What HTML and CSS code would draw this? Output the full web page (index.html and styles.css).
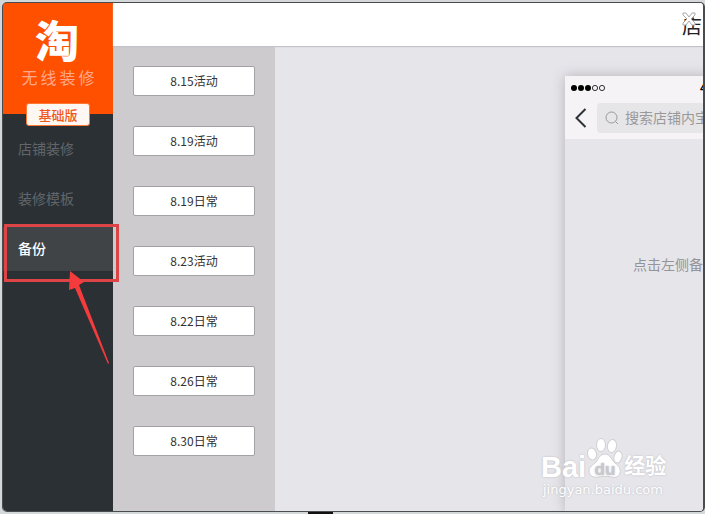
FILE: index.html
```
<!DOCTYPE html>
<html lang="zh-CN">
  <head>
    <meta charset="utf-8">
    <title>无线装修</title>
    <link rel="stylesheet" href="styles.css">
  </head>
  <body>
    <div class="window">
      <aside class="sidebar">
        <div class="brand">
          <div class="brand-logo">淘</div>
          <div class="brand-name">无线装修</div>
          <span class="brand-tag">基础版</span>
        </div>
        <nav class="menu">
          <a href="#shop" class="menu-item">店铺装修</a>
          <a href="#template" class="menu-item">装修模板</a>
          <a href="#backup" class="menu-item active">备份</a>
        </nav>
      </aside>
      <div class="content">
        <header class="topbar">
          <h1 class="title">店</h1>
          <button type="button" class="close" aria-label="关闭">
            <svg width="14" height="14" viewBox="0 0 14 14">
              <path d="M1 1h3l3 4 3-4h3v2L9 7l4 4v2h-3L7 9l-3 4H1v-2l4-4-4-4z" fill="#fff" stroke="#aaa"/>
            </svg>
          </button>
        </header>
        <div class="panels">
          <div class="backups">
            <button type="button" class="backup">8.15活动</button>
            <button type="button" class="backup">8.19活动</button>
            <button type="button" class="backup">8.19日常</button>
            <button type="button" class="backup">8.23活动</button>
            <button type="button" class="backup">8.22日常</button>
            <button type="button" class="backup">8.26日常</button>
            <button type="button" class="backup">8.30日常</button>
          </div>
          <main class="preview">
            <div class="phone">
              <div class="phone-head">
                <div class="status">
                  <svg width="36" height="8" viewBox="0 0 36 8">
                    <g fill="#000">
                      <circle cx="3" cy="4" r="3"/>
                      <circle cx="10" cy="4" r="3"/>
                      <circle cx="17" cy="4" r="3"/>
                    </g>
                    <g fill="none" stroke="#333">
                      <circle cx="24" cy="4" r="2.6"/>
                      <circle cx="31" cy="4" r="2.6"/>
                    </g>
                  </svg>
                  <span class="clock">4:21 PM</span>
                </div>
                <div class="search-row">
                  <button type="button" class="back" aria-label="返回">
                    <svg width="12" height="20" viewBox="0 0 12 20">
                      <path d="M10.500 1L1.500 10l9 9" fill="none" stroke="#2d3238" stroke-width="2"/>
                    </svg>
                  </button>
                  <label class="search">
                    <svg width="14" height="14" viewBox="0 0 14 14" fill="none" stroke="#999">
                      <circle cx="6.500" cy="6.500" r="5.500"/>
                      <path d="M10.500 10.500L13 13"/>
                    </svg>
                    <input type="text" class="search-input" placeholder="搜索店铺内宝贝" aria-label="搜索">
                  </label>
                </div>
              </div>
              <p class="hint">点击左侧备份</p>
            </div>
          </main>
        </div>
      </div>
    </div>

    <!-- highlight over the backup entry -->
    <div class="mark"></div>
    <svg class="arrow" width="44" height="96" viewBox="0 0 44 96">
      <path d="M3 0L17 11l-5 3 30 78-1 1L8 17l-6 2z" fill="#f53b3b"/>
    </svg>

    <div class="watermark">
      <div class="watermark-top">
        <span class="watermark-bai">Bai</span>
        <svg width="36" height="42" viewBox="0 0 36 42">
          <g fill="#fff" stroke="#cfcfd4">
            <ellipse cx="5" cy="17" rx="4.500" ry="6" transform="rotate(-12 5 17)"/>
            <ellipse cx="14" cy="8" rx="4.500" ry="6.500"/>
            <ellipse cx="25" cy="9" rx="4.500" ry="6.500" transform="rotate(8 25 9)"/>
            <ellipse cx="31" cy="20" rx="4" ry="6" transform="rotate(14 31 20)"/>
            <path d="M18 17c5 0 6 5 10 9 4 3 6 6 5 10-1 4-5 5-9 4-4-1-8-1-12 0-5 1-10-1-10-6 0-4 4-6 7-9 3-4 4-8 9-8z"/>
          </g>
          <text class="watermark-du" x="18" y="38" text-anchor="middle">du</text>
        </svg>
        <span class="watermark-cn">经验</span>
      </div>
      <div class="watermark-url">jingyan.baidu.com</div>
    </div>
  </body>
</html>
```

FILE: styles.css
```
*{
  box-sizing: border-box;
}
body{
  margin: 0;
  height: 100vh;
  padding: 2px 0 2px 2px;
  overflow: hidden;
  background: linear-gradient(#111, #111) 308px 100% / 25px 3px no-repeat #d5d8d8;
  font-family: "Noto Sans CJK SC", sans-serif;
}
button{
  font-family: inherit;
  padding: 0;
  cursor: pointer;
}
.window{
  display: flex;
  height: 100%;
  border: 1px solid #4a4d50;
  border-right-width: 2px;
  border-radius: 5px;
  overflow: hidden;
  background-color: #e6e5ea;
}

/* sidebar */
.sidebar{
  flex: 0 0 110px;
  background-color: #2b3034;
}
.brand{
  position: relative;
  height: 111px;
  padding-top: 12px;
  background-color: #ff5000;
  text-align: center;
}
.brand-logo{
  padding-right: 2px;
  color: #fff;
  font-size: 44px;
  font-weight: 900;
  line-height: 48px;
}
.brand-name{
  padding-left: 3px;
  color: #ffa78c;
  font-size: 16px;
  line-height: 28px;
  letter-spacing: 3px;
}
.brand-tag{
  position: absolute;
  left: 23px;
  bottom: -12px;
  width: 64px;
  border: 1px solid #ff7733;
  border-radius: 3px;
  background-color: #fff8f2;
  color: #f0571c;
  font-size: 13px;
  font-weight: 500;
  line-height: 21px;
}
.menu{
  display: flex;
  flex-direction: column;
  gap: 6px;
  padding-top: 13px;
}
.menu-item{
  padding: 0 0 2px 15px;
  color: #61666b;
  font-size: 14px;
  line-height: 42px;
  text-decoration: none;
}
.menu-item.active{
  background-color: #404446;
  color: #fff;
  font-weight: 500;
}

/* content */
.content{
  flex: 1;
  min-width: 0;
  display: flex;
  flex-direction: column;
}
.topbar{
  position: relative;
  z-index: 1;
  flex: 0 0 43px;
  padding-left: 569px;
  background-color: #fff;
  box-shadow: 0 1px 1px #c4c4c8;
  overflow: hidden;
}
.title{
  margin: 0;
  color: #222;
  font-size: 20px;
  font-weight: 400;
  line-height: 46px;
}
.close{
  position: absolute;
  top: 9px;
  right: 7px;
  width: 14px;
  height: 14px;
  border: 0;
  background: none;
}
.close svg{
  display: block;
}
.panels{
  flex: 1;
  min-height: 0;
  display: flex;
}
.backups{
  flex: 0 0 162px;
  display: flex;
  flex-direction: column;
  gap: 30px;
  padding: 20px;
  background-color: #cdcbce;
}
.backup{
  flex: 0 0 30px;
  padding-bottom: 2px;
  border: 1px solid #a3a1a5;
  border-radius: 2px;
  background-color: #fff;
  color: #333;
  font-size: 12px;
}
.preview{
  flex: 1;
  min-width: 0;
  display: flex;
  padding: 30px 0 0 290px;
  overflow: hidden;
}
.phone{
  flex: 0 0 320px;
  background-color: #e6e5ea;
  box-shadow: 0 0 12px #b4b3b8;
}
.phone-head{
  height: 63px;
  padding: 6px 6px 0;
  background-color: #f5f3f6;
}
.status{
  display: flex;
  align-items: center;
  height: 12px;
}
.clock{
  padding-left: 93px;
  color: #000;
  font-size: 11px;
  font-weight: 700;
}
.search-row{
  display: flex;
  align-items: center;
  gap: 10px;
  padding: 9px 0 0 4px;
}
.back{
  width: 12px;
  height: 20px;
  border: 0;
  background: none;
}
.back svg{
  display: block;
}
.search{
  flex: 1;
  display: flex;
  align-items: center;
  gap: 6px;
  height: 30px;
  padding-left: 8px;
  border-radius: 4px;
  background-color: #e6e5e8;
}
.search-input{
  flex: 1;
  min-width: 0;
  padding: 0 0 2px;
  border: 0;
  background: none;
  font-family: inherit;
  font-size: 14px;
}
.search-input::placeholder{
  color: #999;
}
.hint{
  margin: 0;
  padding: 114px 0 0 68px;
  color: #949398;
  font-size: 14px;
  line-height: 22px;
}

/* overlays */
.mark{
  position: absolute;
  left: 4px;
  top: 224px;
  width: 115px;
  height: 58px;
  border: 3px solid #dc4446;
}
.arrow{
  position: absolute;
  left: 67px;
  top: 271px;
}
.watermark{
  position: absolute;
  left: 541px;
  top: 437px;
  color: #fff;
  font-family: "Liberation Sans", "Noto Sans CJK SC", sans-serif;
  text-shadow: 0 0 2px #b4b4ba;
}
.watermark-top{
  display: flex;
  align-items: flex-end;
  gap: 1px;
  height: 42px;
}
.watermark-bai{
  font-size: 29px;
  font-weight: 700;
  line-height: 24px;
}
.watermark-du{
  fill: #c8c8ce;
  font-size: 17px;
  font-weight: 700;
}
.watermark-cn{
  font-size: 21px;
  font-weight: 700;
  line-height: 26px;
}
.watermark-url{
  padding-left: 2px;
  font-family: "DejaVu Sans", sans-serif;
  font-size: 13px;
  line-height: 22px;
}
```
